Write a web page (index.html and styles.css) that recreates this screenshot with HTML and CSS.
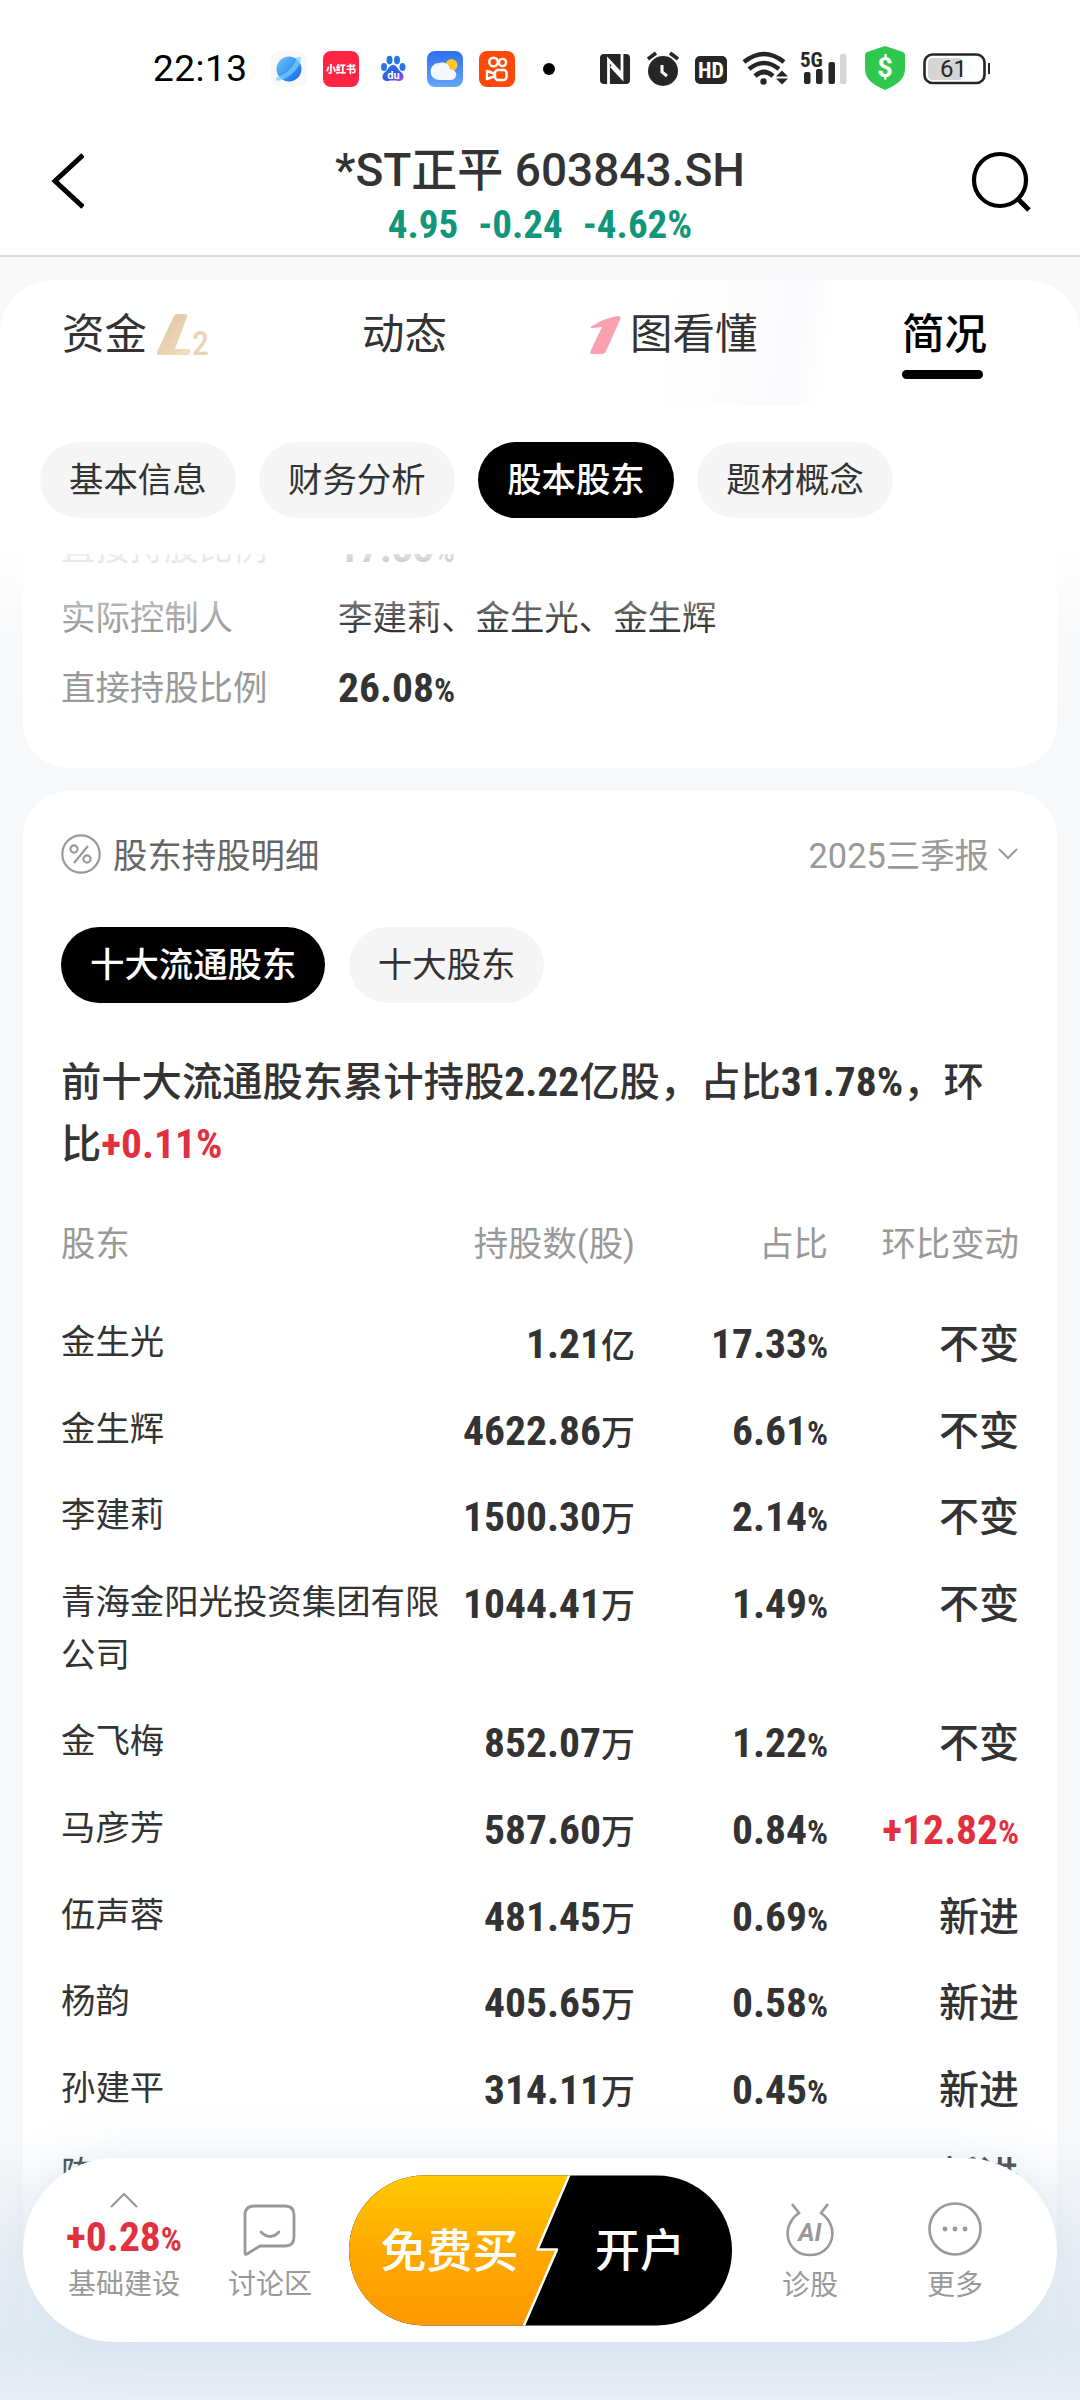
FILE: index.html
```html
<!DOCTYPE html>
<html lang="zh-CN">
<head>
    <meta charset="UTF-8">
    <meta name="viewport" content="width=device-width, initial-scale=1.0">
    <title>*ST正平 603843.SH</title>
    <link rel="stylesheet" href="styles.css">
</head>
<body>
    <div class="statusbar">
        <span class="time">22:13</span>
        <div class="apps">
            <svg width="36" height="36" viewBox="0 0 36 36">
                <defs><linearGradient id="planet" x1="0" y1="0" x2="1" y2="1"><stop offset="0" stop-color="#6fc4fa"/><stop offset=".5" stop-color="#3f9af5"/><stop offset="1" stop-color="#0f5fe8"/></linearGradient></defs>
                <rect width="36" height="36" rx="9" fill="#f8f8f8"/>
                <circle cx="18" cy="18" r="12.500" fill="url(#planet)"/>
                <path d="M6 26c-3 4 1 5 7 2C22 24 30 14 30 8c1-3-3-2-5-1 1 5-9 17-19 19z" fill="#7ed0fb" opacity=".7"/>
            </svg>
            <svg width="36" height="36" viewBox="0 0 36 36">
                <rect width="36" height="36" rx="8" fill="#ff2442"/>
                <text x="18" y="22" font-size="10" font-weight="900" text-anchor="middle" fill="#fff">小红书</text>
            </svg>
            <svg width="36" height="36" viewBox="0 0 36 36">
                <defs><linearGradient id="paw" x1="0" y1="0" x2="1" y2="1"><stop offset="0" stop-color="#1d7df2"/><stop offset=".6" stop-color="#3a55e0"/><stop offset="1" stop-color="#b04de0"/></linearGradient></defs>
                <g fill="#2676ea">
                    <ellipse cx="9" cy="16" rx="3" ry="4"/><ellipse cx="14.500" cy="9" rx="3" ry="4.200"/>
                    <ellipse cx="22" cy="9" rx="3" ry="4.200"/><ellipse cx="27.500" cy="16" rx="3" ry="4"/>
                </g>
                <path d="M18 14c4 0 5 5 8 7 5 4 2 10-3 9-3-.6-7-.6-10 0-5 1-8-5-3-9 3-2 4-7 8-7z" fill="url(#paw)"/>
                <text x="18.500" y="28" font-size="11" font-weight="700" text-anchor="middle" fill="#fff">du</text>
            </svg>
            <svg width="36" height="36" viewBox="0 0 36 36">
                <defs><linearGradient id="sky" x1="0" y1="0" x2="0" y2="1"><stop offset="0" stop-color="#2f6ff0"/><stop offset="1" stop-color="#64a6f8"/></linearGradient></defs>
                <rect width="36" height="36" rx="8" fill="url(#sky)"/>
                <circle cx="24.500" cy="14" r="6" fill="#ffc62b"/>
                <path d="M12 29a8 8 0 1 1 0-17 8 8 0 0 1 11 6.500 5.300 5.300 0 1 1 1 10.500z" fill="#f4f7fc"/>
            </svg>
            <svg width="36" height="36" viewBox="0 0 36 36">
                <rect width="36" height="36" rx="8" fill="#ff4906"/>
                <g fill="none" stroke="#fff" stroke-width="2.400">
                    <circle cx="14.500" cy="11" r="4.300"/><circle cx="23.500" cy="11.500" r="3.600"/>
                    <rect x="16" y="19" width="11.500" height="10" rx="3"/><path d="M8 20v8l7-2.500v-3z" stroke-linejoin="round"/>
                </g>
            </svg>
        </div>
        <span class="dot"></span>
        <svg class="signals" width="400" height="50" viewBox="590 44 400 50">
            <rect x="600" y="54" width="30" height="30" rx="4" fill="#262626"/>
            <path d="M608.500 84V60l13 14M622 54v24l-11-12" fill="none" stroke="#fff" stroke-width="2.800"/>
            <circle cx="663" cy="71" r="15" fill="#262626"/>
            <path d="M648 59l8-6M678 59l-8-6" stroke="#262626" stroke-width="3.600"/>
            <path d="M662 65v7l5 4" fill="none" stroke="#fff" stroke-width="3"/>
            <rect x="695" y="56" width="32" height="28" rx="5" fill="#262626"/>
            <text class="cond" x="711" y="78" font-size="22" font-weight="700" text-anchor="middle" fill="#fff">HD</text>
            <g fill="none" stroke="#262626" stroke-width="4.600">
                <path d="M744 62q20-16 40 0M749 69q15-12 30 0M755 76q9-8 18 0"/>
            </g>
            <circle cx="763.500" cy="81.500" r="3.200" fill="#262626"/>
            <path d="M776 76.500l6-6 6 6zM776 78.500l6 6 6-6z" fill="#262626"/>
            <text class="cond" x="800" y="67" font-size="21" font-weight="700" fill="#262626">5G</text>
            <g fill="#262626"><rect x="804" y="72" width="6.500" height="12" rx="2"/><rect x="816" y="69" width="6.500" height="15" rx="2"/><rect x="828.500" y="62" width="6.500" height="22" rx="2"/></g>
            <rect x="840" y="54" width="6.500" height="30" rx="2" fill="#d5d5d5"/>
            <path d="M885 46l18 6q2 1 2 3v14c0 10-8 16-20 21-12-5-20-11-20-21V55q0-2 2-3z" fill="#2fc84e"/>
            <text x="885" y="77" font-size="27" font-weight="700" text-anchor="middle" fill="#fff">$</text>
            <rect x="924.500" y="54.500" width="60" height="28.500" rx="8" fill="none" stroke="#262626" stroke-width="2.600"/>
            <path d="M961 58v22h-28q-5 0-5-5V63q0-5 5-5z" fill="#d5d5d5"/>
            <rect x="988" y="63" width="2" height="11" fill="#262626"/>
            <text x="953.500" y="77" font-size="24" text-anchor="middle" fill="#262626">61</text>
        </svg>
    </div>

    <div class="header">
        <svg class="back" width="36" height="56" viewBox="0 0 36 56"><path d="M35 2L7 28l28 26" fill="none" stroke="#000" stroke-width="5"/></svg>
        <div class="stock">
            <div class="stock-name">*ST正平 603843.SH</div>
            <div class="stock-price num"><span>4.95</span><span>-0.24</span><span>-4.62%</span></div>
        </div>
        <svg class="search" width="62" height="62" viewBox="0 0 62 62"><circle cx="30" cy="29" r="26" fill="none" stroke="#000" stroke-width="4.200"/><path d="M47 47l12 12" stroke="#000" stroke-width="5"/></svg>
    </div>

    <div class="page">
        <div class="panel">
            <div class="tabs">
                <div class="tab tab-fund">资金
                    <svg width="54" height="42" viewBox="0 0 54 42"><defs><linearGradient id="gold" x1="0" y1="0" x2="1" y2="1"><stop offset="0" stop-color="#dcc2a0"/><stop offset="1" stop-color="#f5dfc2"/></linearGradient></defs><path d="M21 0h7q3 0 2 3L18 35h13q3 0 2 3l-1 3H2q-3 0-2-3L16 4q1-4 5-4z" fill="url(#gold)"/><text class="cond" x="35" y="41" font-size="34" font-weight="500" fill="#ecd3b4">2</text></svg>
                </div>
                <div class="tab tab-news">动态</div>
                <div class="tab tab-chart">
                    <svg width="31" height="38" viewBox="0 0 31 38"><path d="M28 0q4 0 2 4L16 35q-1 3-4 3H2q-3 0-1-4l11-23-10 1q-3 0 0-2Q15 2 28 0z" fill="#fba0af"/></svg>图看懂
                </div>
                <div class="tab tab-profile active">简况</div>
            </div>
            <div class="chips">
                <div class="chip">基本信息</div>
                <div class="chip">财务分析</div>
                <div class="chip active">股本股东</div>
                <div class="chip">题材概念</div>
            </div>
        </div>

        <div class="card holder">
            <div class="row"><span class="label">直接持股比例</span><span class="value num">17.33<small>%</small></span></div>
            <div class="row"><span class="label">实际控制人</span><span class="value">李建莉、金生光、金生辉</span></div>
            <div class="row"><span class="label">直接持股比例</span><span class="value num">26.08<small>%</small></span></div>
        </div>

        <div class="card detail">
            <div class="detail-head">
                <svg width="40" height="40" viewBox="0 0 40 40" fill="none" stroke="#999" stroke-width="2.200"><circle cx="20" cy="20" r="18.700"/><path d="M27 12L13 29"/><circle cx="13" cy="15" r="3.600"/><circle cx="26" cy="25" r="3.600"/></svg>
                <span class="detail-title">股东持股明细</span>
                <span class="period">2025三季报</span>
                <svg width="20" height="12" viewBox="0 0 20 12"><path d="M1 1l9 9 9-9" fill="none" stroke="#999" stroke-width="2"/></svg>
            </div>
            <div class="chips inner">
                <div class="chip active">十大流通股东</div>
                <div class="chip">十大股东</div>
            </div>
            <p class="summary">前十大流通股东累计持股<b class="num">2.22</b>亿股，占比<b class="num">31.78%</b>，环比<b class="num red">+0.11%</b></p>
            <div class="table">
                <div class="tr th"><span>股东</span><span>持股数(股)</span><span>占比</span><span>环比变动</span></div>
                <div class="tr"><span>金生光</span><span class="num">1.21<i>亿</i></span><span class="num">17.33<small>%</small></span><span class="change">不变</span></div>
                <div class="tr"><span>金生辉</span><span class="num">4622.86<i>万</i></span><span class="num">6.61<small>%</small></span><span class="change">不变</span></div>
                <div class="tr"><span>李建莉</span><span class="num">1500.30<i>万</i></span><span class="num">2.14<small>%</small></span><span class="change">不变</span></div>
                <div class="tr"><span>青海金阳光投资集团有限公司</span><span class="num">1044.41<i>万</i></span><span class="num">1.49<small>%</small></span><span class="change">不变</span></div>
                <div class="tr"><span>金飞梅</span><span class="num">852.07<i>万</i></span><span class="num">1.22<small>%</small></span><span class="change">不变</span></div>
                <div class="tr"><span>马彦芳</span><span class="num">587.60<i>万</i></span><span class="num">0.84<small>%</small></span><span class="num red">+12.82<small>%</small></span></div>
                <div class="tr"><span>伍声蓉</span><span class="num">481.45<i>万</i></span><span class="num">0.69<small>%</small></span><span class="change">新进</span></div>
                <div class="tr"><span>杨韵</span><span class="num">405.65<i>万</i></span><span class="num">0.58<small>%</small></span><span class="change">新进</span></div>
                <div class="tr"><span>孙建平</span><span class="num">314.11<i>万</i></span><span class="num">0.45<small>%</small></span><span class="change">新进</span></div>
                <div class="tr"><span>陈</span><span></span><span></span><span class="change">新进</span></div>
            </div>
        </div>
    </div>

    <div class="fade"></div>
    <div class="bottombar">
        <div class="nav nav-index">
            <svg width="28" height="16" viewBox="0 0 28 16"><path d="M1 15L14 2l13 13" fill="none" stroke="#999" stroke-width="2.200"/></svg>
            <span class="num red">+0.28<small>%</small></span>
            <span>基础建设</span>
        </div>
        <div class="nav nav-talk">
            <svg width="54" height="54" viewBox="0 0 54 54" fill="none" stroke="#999" stroke-width="2.800" stroke-linejoin="round" stroke-linecap="round"><path d="M2 12q0-9 9-9h31q9 0 9 9v22q0 9-9 9H17L4 51q-2 1-2-1z"/><path d="M18 29q9 9 18 0"/></svg>
            <span>讨论区</span>
        </div>
        <div class="open">
            <svg width="384" height="151" viewBox="0 0 384 151">
                <defs>
                    <linearGradient id="orange" x1="0" y1="0" x2="0" y2="1"><stop offset="0" stop-color="#ffcb00"/><stop offset=".5" stop-color="#ffa900"/><stop offset="1" stop-color="#ff9900"/></linearGradient>
                    <clipPath id="pill"><rect y=".5" width="383" height="150" rx="75"/></clipPath>
                </defs>
                <g clip-path="url(#pill)">
                    <rect width="384" height="151" fill="#000"/>
                    <path d="M-4-4H222L188.500 74.500H208L173.500 154H-4z" fill="url(#orange)" stroke="#fff" stroke-width="2.500" stroke-linejoin="round"/>
                </g>
                <text x="31.500" y="92" font-size="46" font-weight="500" fill="#fff">免费买</text>
                <text x="246" y="92" font-size="45" font-weight="500" fill="#fff">开户</text>
            </svg>
        </div>
        <div class="nav nav-ai">
            <svg width="54" height="56" viewBox="0 0 54 56" fill="none" stroke="#999" stroke-width="2.600"><path d="M9 3l7 9C-4 26 4 54 27 54S58 26 38 12l7-9"/><text x="27" y="40" font-size="25" font-weight="700" font-style="italic" text-anchor="middle" fill="#999" stroke="none">AI</text></svg>
            <span>诊股</span>
        </div>
        <div class="nav nav-more">
            <svg width="54" height="56" viewBox="0 0 54 56"><circle cx="27" cy="28" r="25.500" fill="none" stroke="#999" stroke-width="2.600"/><g fill="#999"><circle cx="17" cy="28" r="2.400"/><circle cx="27" cy="28" r="2.400"/><circle cx="37" cy="28" r="2.400"/></g></svg>
            <span>更多</span>
        </div>
    </div>
</body>
</html>
```
FILE: styles.css
```css
* {
    box-sizing: border-box;
}
body {
    margin: 0;
    width: 1080px;
    height: 2400px;
    overflow: hidden;
    position: relative;
    display: flex;
    flex-direction: column;
    font-family: Roboto, "Noto Sans CJK SC", sans-serif;
    font-size: 34.4px;
    color: #333;
    background-color: #fff;
}
svg {
    display: block;
    flex: none;
}
.num, .cond {
    font-family: "Roboto Condensed", Roboto, "Noto Sans CJK SC", sans-serif;
}
.num {
    font-weight: 700;
    font-size: 41.5px;
}
.num small {
    font-size: 33px;
    line-height: 0;
}
.red {
    color: #e2303f;
}

/* 状态栏 */
.statusbar {
    height: 120px;
    flex: none;
    padding: 17px 0 0 153px;
    display: flex;
    align-items: center;
}
.time {
    width: 118px;
    font-size: 37px;
    color: #000;
    letter-spacing: 0.5px;
}
.apps {
    display: flex;
    gap: 16px;
}
.dot {
    width: 12px;
    height: 12px;
    border-radius: 50%;
    background-color: #000;
    margin: 0 35px 0 28px;
}

/* 标题 */
.header {
    height: 137px;
    flex: none;
    border-bottom: 2px solid #dcdcdc;
    display: flex;
    justify-content: space-between;
    padding: 0 48px;
}
.back {
    margin-top: 33px;
}
.search {
    margin-top: 31px;
}
.stock {
    text-align: center;
    padding: 22px 0 0 26px;
}
.stock-name {
    font-size: 46px;
    line-height: 56px;
    font-weight: 500;
}
.stock-price {
    display: flex;
    justify-content: center;
    gap: 20px;
    font-size: 39px;
    line-height: 55px;
    color: #12967a;
}

/* 页面内容 */
.page {
    flex: 1;
    min-height: 0;
    padding-top: 23px;
    background: linear-gradient(#f8f8f8 0, #fafafa 290px, #f6f8fa 450px, #f7f8fa 100%);
}
.panel {
    position: relative;
    height: 274px;
    padding-top: 26px;
    border-radius: 54px 54px 0 0;
    background: #fff linear-gradient(98deg, #fff 660px, #fafafd 800px, #fff 830px) 0 0 / 1080px 126px no-repeat;
}
.panel::after {
    content: "";
    position: absolute;
    left: 0;
    top: 274px;
    width: 1080px;
    height: 76px;
    background: linear-gradient(rgba(255, 255, 255, 0.85), rgba(255, 255, 255, 0));
}
.tabs {
    display: flex;
    height: 79px;
    font-size: 42.5px;
    line-height: 58px;
}
.tab {
    display: flex;
    align-items: center;
    height: 58px;
}
.tab-fund {
    width: 300px;
    margin-left: 62px;
    gap: 10px;
}
.tab-news {
    width: 228px;
}
.tab-chart {
    width: 312px;
    gap: 9px;
}
.tab.active {
    position: relative;
    color: #000;
    font-weight: 500;
}
.tab.active::after {
    content: "";
    position: absolute;
    left: 0;
    top: 64px;
    width: 81px;
    height: 9px;
    border-radius: 5px;
    background-color: #000;
}
.chips {
    display: flex;
    gap: 23.500px;
    padding: 57px 40px 0;
}
.chip {
    height: 76px;
    padding: 0 29px;
    line-height: 76px;
    border-radius: 38px;
    background-color: #f5f5f5;
}
.chip.active {
    color: #fff;
    font-weight: 500;
    background-color: #000;
}
.card {
    margin: 0 23px;
    padding: 0 39px 0 38px;
    background-color: #fff;
}
.holder {
    height: 214px;
    overflow: hidden;
    border-radius: 0 0 46px 46px;
    display: flex;
    flex-direction: column;
}
.row {
    flex: none;
    display: flex;
    align-items: center;
    height: 70px;
}
.row:first-child {
    margin-top: -44px;
}
.label {
    width: 277px;
    color: #999;
}
.value.num {
    font-size: 41.5px;
    padding-top: 5px;
}
.detail {
    margin-top: 23px;
    height: 1600px;
    padding-top: 33px;
    border-radius: 46px 46px 0 0;
}
.detail-head {
    display: flex;
    align-items: center;
    height: 60px;
    color: #999;
}
.detail-title {
    flex: 1;
    padding-left: 12px;
    margin-top: -2px;
    color: #666;
}
.period {
    padding-right: 9px;
    margin-top: -2px;
}
.chips.inner {
    padding: 43px 0 0;
}
.summary {
    margin: 48px 0 0;
    font-size: 40.3px;
    line-height: 61px;
    font-weight: 500;
}

/* 股东列表 */
.table {
    margin-top: 43px;
}
.tr {
    display: grid;
    grid-template-columns: 387px 187px 193px 191px;
    padding: 17px 0 16.600px;
    line-height: 53px;
}
.tr.th {
    color: #999;
    padding: 0 0 28px;
    font-size: 34.4px;
    grid-template-columns: 187px 387px 193px 191px;
}
.tr span + span {
    text-align: right;
    white-space: nowrap;
}
.tr .num {
    padding-top: 1px;
    height: 53px;
}
.tr i {
    font-size: 34px;
    line-height: 0;
    font-style: normal;
    font-weight: 500;
}
.change {
    height: 53px;
    padding-top: 2px;
    font-size: 40px;
    font-weight: 500;
}

/* 底部悬浮栏 */
.fade {
    position: absolute;
    left: 0;
    bottom: 0;
    width: 1080px;
    height: 270px;
    background: linear-gradient(rgba(230, 238, 246, 0), rgba(221, 231, 241, 0.9) 80%, #e8edf6);
}
.bottombar {
    position: absolute;
    left: 23px;
    bottom: 58px;
    width: 1034px;
    height: 184px;
    border-radius: 92px;
    background-color: #fff;
    box-shadow: 0 0 50px rgba(170, 195, 220, 0.25);
    display: flex;
    font-size: 28px;
    color: #999;
}
.nav {
    display: flex;
    flex-direction: column;
    align-items: center;
    line-height: 38px;
}
.nav-index {
    width: 202px;
    padding-top: 34px;
}
.nav-index .num {
    font-size: 41.5px;
    line-height: 58px;
}
.nav-talk {
    width: 90px;
    padding-top: 45px;
    gap: 9px;
}
.open {
    margin: 17px 0 0 34px;
}
.nav-ai {
    width: 90px;
    margin-left: 32px;
    padding-top: 43px;
    gap: 10px;
}
.nav-more {
    width: 90px;
    margin-left: 55px;
    padding-top: 43px;
    gap: 10px;
}
```
